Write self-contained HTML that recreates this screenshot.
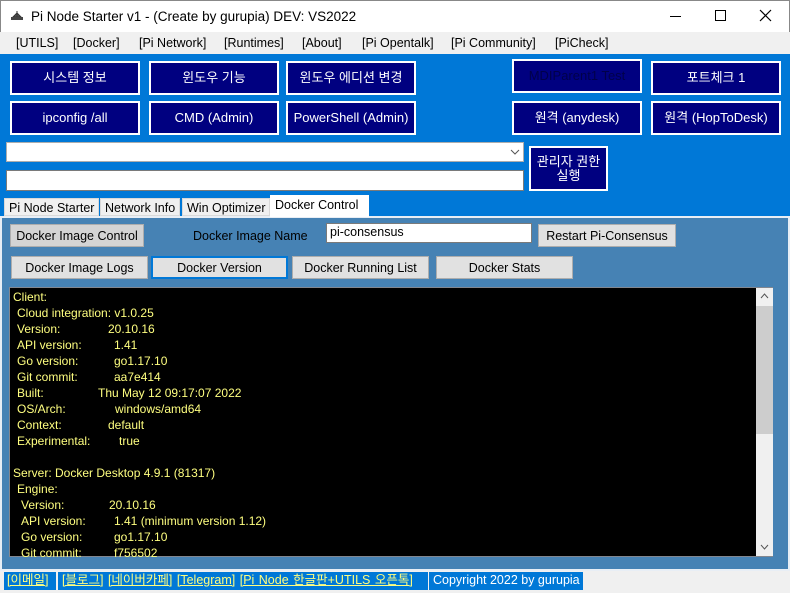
<!DOCTYPE html>
<html><head><meta charset="utf-8"><style>
*{box-sizing:border-box;margin:0;padding:0}
body{width:790px;height:593px;position:relative;overflow:hidden;background:#0078d7;font-family:"Liberation Sans","Noto Sans CJK KR",sans-serif;font-size:12px}
.a{position:absolute}
.title{left:0;top:0;width:790px;height:32px;background:#fff;border:1px solid #888;border-bottom:none}
.menu{left:0;top:32px;width:790px;height:22px;background:#f0f0f0;color:#000;font-size:12.5px}
.menu span{position:absolute;top:4px}
.bb{position:absolute;background:#000080;border:2px solid #fff;color:#fff;font-size:13px;display:flex;align-items:center;justify-content:center;text-align:center;line-height:14px}
.gb{position:absolute;background:#e1e1e1;border:1px solid #adadad;color:#000;font-size:12.5px;display:flex;align-items:center;justify-content:center}
.tab{position:absolute;top:198px;height:18px;background:#f0f0f0;color:#000;font-size:12.5px;padding:2px 4px 0;border:1px solid #d9d9d9}
.term{left:9px;top:287px;width:764px;height:270px;background:#000;border:1px solid #828790;color:#ffff80;font-size:12px}
.term div{position:absolute;white-space:pre}
.st{position:absolute;top:572px;height:18px;font-size:12.5px;padding:0 2px;line-height:17px}
</style></head><body>
<div class="a title">
<svg class="a" style="left:9px;top:9px" width="14" height="12" viewBox="0 0 14 12"><path d="M7 1 L7 7 M3 7 L7 3 L11 7Z" stroke="#333" fill="#555"/><rect x="1" y="7" width="12" height="3" fill="#444"/></svg>
<div class="a" style="left:30px;top:8px;font-size:13.5px;color:#000">Pi Node Starter v1 - (Create by gurupia) DEV: VS2022</div>
<div class="a" style="left:669px;top:15px;width:11px;height:1px;background:#000"></div>
<div class="a" style="left:714px;top:9px;width:11px;height:11px;border:1px solid #000"></div>
<svg class="a" style="left:758px;top:8px" width="13" height="13"><path d="M1 1L12 12M12 1L1 12" stroke="#000" stroke-width="1.2"/></svg>
</div>
<div class="a menu">
<span style="left:16px">[UTILS]</span><span style="left:73px">[Docker]</span><span style="left:139px">[Pi Network]</span><span style="left:224px">[Runtimes]</span><span style="left:302px">[About]</span><span style="left:362px">[Pi Opentalk]</span><span style="left:451px">[Pi Community]</span><span style="left:555px">[PiCheck]</span>
</div>
<div class="bb" style="left:10px;top:61px;width:130px;height:34px">시스템 정보</div>
<div class="bb" style="left:149px;top:61px;width:130px;height:34px">윈도우 기능</div>
<div class="bb" style="left:286px;top:61px;width:130px;height:34px">윈도우 에디션 변경</div>
<div class="bb" style="left:512px;top:59px;width:130px;height:34px;color:#00004a">MDIParent1 Test</div>
<div class="bb" style="left:651px;top:61px;width:130px;height:34px">포트체크 1</div>
<div class="bb" style="left:10px;top:101px;width:130px;height:34px">ipconfig /all</div>
<div class="bb" style="left:149px;top:101px;width:130px;height:34px">CMD (Admin)</div>
<div class="bb" style="left:286px;top:101px;width:130px;height:34px">PowerShell (Admin)</div>
<div class="bb" style="left:512px;top:101px;width:130px;height:34px">원격 (anydesk)</div>
<div class="bb" style="left:651px;top:101px;width:130px;height:34px">원격 (HopToDesk)</div>
<div class="a" style="left:6px;top:142px;width:518px;height:20px;background:#fff;border:1px solid #adadad"><svg class="a" style="right:3px;top:6px" width="10" height="6"><path d="M1 1L5 5L9 1" stroke="#555" fill="none"/></svg></div>
<div class="a" style="left:6px;top:170px;width:518px;height:21px;background:#fff;border:1px solid #7a7a7a"></div>
<div class="bb" style="left:529px;top:146px;width:79px;height:45px;font-size:13px">관리자 권한<br>실행</div>
<div class="a" style="left:0;top:216px;width:790px;height:355px;background:#4682b4;border:2px solid #e8eef5"></div>
<div class="tab" style="left:4px">Pi Node Starter</div>
<div class="tab" style="left:100px">Network Info</div>
<div class="tab" style="left:182px">Win Optimizer</div>
<div class="tab" style="left:270px;top:195px;height:22px;width:99px;background:#fff;border-color:#fff;font-size:12.5px">Docker Control</div>
<div class="gb" style="left:10px;top:224px;width:134px;height:23px;background:#d4d4d4">Docker Image Control</div>
<div class="a" style="left:193px;top:229px;font-size:12.5px;color:#000">Docker Image Name</div>
<div class="a" style="left:326px;top:223px;width:206px;height:20px;background:#fff;border:1px solid #7a7a7a;padding:1px 3px;color:#000;font-size:12.5px">pi-consensus</div>
<div class="gb" style="left:538px;top:224px;width:138px;height:23px">Restart Pi-Consensus</div>
<div class="gb" style="left:11px;top:256px;width:137px;height:23px">Docker Image Logs</div>
<div class="gb" style="left:151px;top:256px;width:137px;height:23px;border:2px solid #0078d7">Docker Version</div>
<div class="gb" style="left:292px;top:256px;width:137px;height:23px">Docker Running List</div>
<div class="gb" style="left:436px;top:256px;width:137px;height:23px">Docker Stats</div>
<div class="a term">
<div style="left:3px;top:2px">Client:</div>
<div style="left:7px;top:18px">Cloud integration: v1.0.25</div>
<div style="left:7px;top:34px">Version:</div><div style="left:98px;top:34px">20.10.16</div>
<div style="left:7px;top:50px">API version:</div><div style="left:104px;top:50px">1.41</div>
<div style="left:7px;top:66px">Go version:</div><div style="left:104px;top:66px">go1.17.10</div>
<div style="left:7px;top:82px">Git commit:</div><div style="left:104px;top:82px">aa7e414</div>
<div style="left:7px;top:98px">Built:</div><div style="left:88px;top:98px">Thu May 12 09:17:07 2022</div>
<div style="left:7px;top:114px">OS/Arch:</div><div style="left:105px;top:114px">windows/amd64</div>
<div style="left:7px;top:130px">Context:</div><div style="left:98px;top:130px">default</div>
<div style="left:7px;top:146px">Experimental:</div><div style="left:109px;top:146px">true</div>
<div style="left:3px;top:178px">Server: Docker Desktop 4.9.1 (81317)</div>
<div style="left:7px;top:194px">Engine:</div>
<div style="left:11px;top:210px">Version:</div><div style="left:99px;top:210px">20.10.16</div>
<div style="left:11px;top:226px">API version:</div><div style="left:104px;top:226px">1.41 (minimum version 1.12)</div>
<div style="left:11px;top:242px">Go version:</div><div style="left:104px;top:242px">go1.17.10</div>
<div style="left:11px;top:258px">Git commit:</div><div style="left:104px;top:258px">f756502</div>
<div style="left:746px;top:0;width:17px;height:268px;background:#f0f0f0"></div>
<div style="left:746px;top:18px;width:17px;height:128px;background:#cdcdcd"></div>
<svg class="a" style="left:750px;top:5px;position:absolute" width="9" height="6"><path d="M1 5L4.5 1L8 5" stroke="#555" fill="none"/></svg>
<svg class="a" style="left:750px;top:256px;position:absolute" width="9" height="6"><path d="M1 1L4.5 5L8 1" stroke="#555" fill="none"/></svg>
</div>
<div class="a" style="left:0;top:571px;width:790px;height:22px;background:#f0f0f0"></div>
<div class="a" style="left:4px;top:572px;width:579px;height:18px;background:#0078d7"></div>
<div class="a" style="left:56px;top:572px;width:2px;height:18px;background:#f0f0f0"></div>
<div class="a" style="left:428px;top:572px;width:1px;height:18px;background:#f0f0f0"></div>
<div class="st" style="left:5px;color:#ffff80;text-decoration:underline">[이메일]</div>
<div class="st" style="left:60px;width:368px;color:#ffff80;word-spacing:1px"><u>[블로그]</u> <u>[네이버카페]</u> <u>[Telegram]</u> <u>[Pi Node 한글판+UTILS 오픈톡]</u></div>
<div class="st" style="left:431px;width:152px;color:#fff">Copyright 2022 by gurupia</div>
</body></html>
